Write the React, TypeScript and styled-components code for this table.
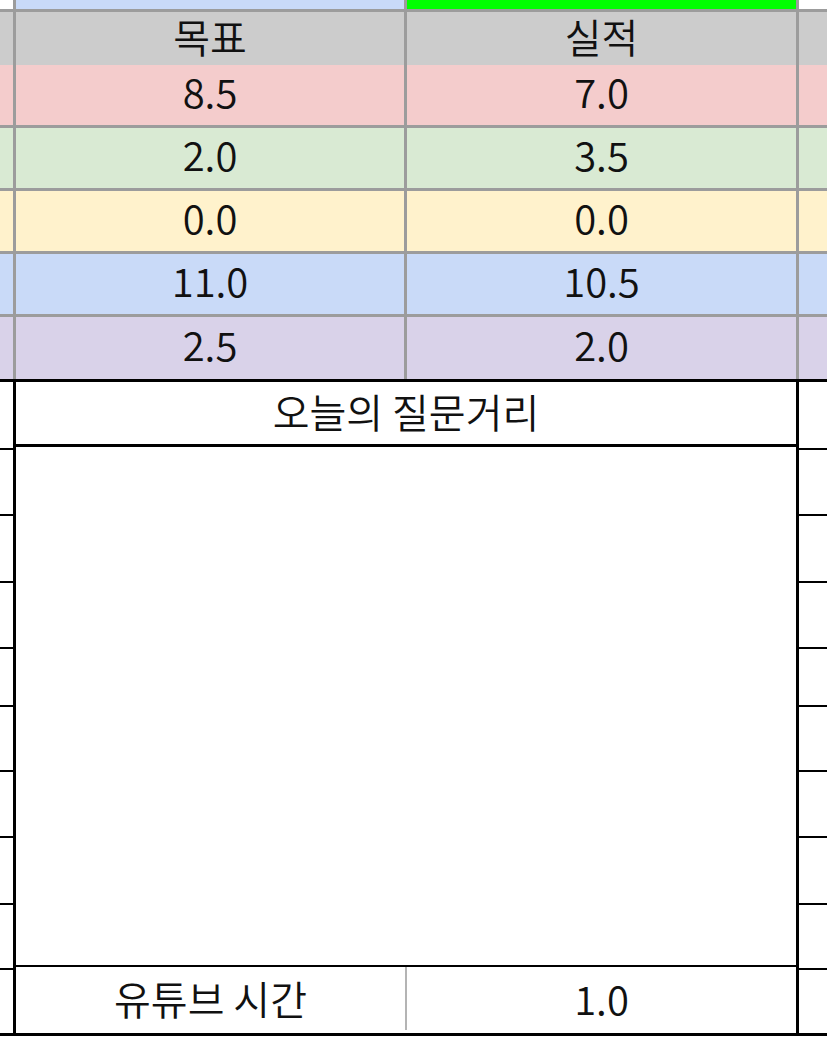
import React from 'react';
import styled, { createGlobalStyle } from 'styled-components';

const GlobalStyle = createGlobalStyle`
  html, body {
    margin: 0;
    padding: 0;
    background: #ffffff;
  }
  body {
    font-family: 'Noto Sans CJK KR', 'Noto Sans', sans-serif;
    color: #111;
  }
`;

type Row = { a: string; b: string; fill: string };

const rows: Row[] = [
  { a: '8.5', b: '7.0', fill: '#f4cccc' },
  { a: '2.0', b: '3.5', fill: '#d9ead3' },
  { a: '0.0', b: '0.0', fill: '#fff2cc' },
  { a: '11.0', b: '10.5', fill: '#c9daf8' },
  { a: '2.5', b: '2.0', fill: '#d9d2e9' },
];

// heights of the little cells in the side columns of the lower block
const sideCells = [66, 64, 65, 64, 56, 63, 64, 65, 63, 63];

export default function App() {
  return (
    <>
      <GlobalStyle />
      <Sheet>
        <Upper>
          <GridRow $h={9}>
            <Cell $fill="#ffffff" />
            <Cell $fill="#c9daf8" />
            <Cell $fill="#00ff00" />
            <Cell $fill="#ffffff" />
          </GridRow>
          <GridRow $h={50}>
            <Cell $fill="#cccccc" />
            <Cell $fill="#cccccc" $lift={10}>목표</Cell>
            <Cell $fill="#cccccc" $lift={10}>실적</Cell>
            <Cell $fill="#cccccc" />
          </GridRow>
          {rows.map((r, i) => (
            <GridRow key={i} $h={i === rows.length - 1 ? 62 : 60}>
              <Cell $fill={r.fill} />
              <Cell $fill={r.fill} $lift={9}>{r.a}</Cell>
              <Cell $fill={r.fill} $lift={9}>{r.b}</Cell>
              <Cell $fill={r.fill} />
            </GridRow>
          ))}
        </Upper>

        <Lower>
          <SideColumn $w="13px">
            {sideCells.map((h, i) => (
              <SideCell key={i} $h={h} $last={i === sideCells.length - 1} />
            ))}
          </SideColumn>

          <Body>
            <TitleCell>오늘의 질문거리</TitleCell>
            <BigCell />
            <PairRow>
              <PlainCell>유튜브 시간</PlainCell>
              <PlainCell $divider>1.0</PlainCell>
            </PairRow>
          </Body>

          <SideColumn $w="auto" $grow>
            {sideCells.map((h, i) => (
              <SideCell key={i} $h={h} $last={i === sideCells.length - 1} />
            ))}
          </SideColumn>
        </Lower>
      </Sheet>
    </>
  );
}

const Sheet = styled.div`
  width: 827px;
  height: 1057px;
  overflow: hidden;
  background: #ffffff;
`;

const Upper = styled.div`
  display: flex;
  flex-direction: column;
  gap: 3px;
  background: #9c9c9c;
`;

const GridRow = styled.div<{ $h: number }>`
  display: grid;
  grid-template-columns: 13px 388px 389px 1fr;
  column-gap: 3px;
  height: ${(p) => p.$h}px;
`;

const Cell = styled.div<{ $fill: string; $lift?: number }>`
  background: ${(p) => p.$fill};
  display: flex;
  align-items: center;
  justify-content: center;
  box-sizing: border-box;
  padding-bottom: ${(p) => p.$lift ?? 0}px;
  font-size: 40px;
  font-weight: 350;
  line-height: 1.2;
  color: #111;
  white-space: nowrap;
`;

const Lower = styled.div`
  display: flex;
  border-top: 3px solid #000;
  border-bottom: 3px solid #000;
`;

const SideColumn = styled.div<{ $w: string; $grow?: boolean }>`
  display: flex;
  flex-direction: column;
  width: ${(p) => p.$w};
  flex: ${(p) => (p.$grow ? 1 : 'none')};
`;

const SideCell = styled.div<{ $h: number; $last?: boolean }>`
  height: ${(p) => p.$h}px;
  border-bottom: ${(p) => (p.$last ? 'none' : '2px solid #000')};
  background: #ffffff;
`;

const Body = styled.div`
  width: 780px;
  display: flex;
  flex-direction: column;
  border-left: 3px solid #000;
  border-right: 3px solid #000;
`;

const TitleCell = styled.div`
  height: 65px;
  border-bottom: 3px solid #000;
  display: flex;
  align-items: center;
  justify-content: center;
  font-size: 40px;
  font-weight: 350;
  line-height: 1.2;
  padding-bottom: 4px;
  box-sizing: border-box;
`;

const BigCell = styled.div`
  height: 518px;
  border-bottom: 2px solid #000;
  background: #ffffff;
`;

const PairRow = styled.div`
  display: grid;
  grid-template-columns: 389px 1fr;
  height: 63px;
`;

const PlainCell = styled.div<{ $divider?: boolean }>`
  display: flex;
  align-items: center;
  justify-content: center;
  box-sizing: border-box;
  font-size: 40px;
  font-weight: 350;
  line-height: 1.2;
  padding-bottom: 2px;
  border-left: ${(p) => (p.$divider ? '2px solid #b4b4b4' : 'none')};
`;
